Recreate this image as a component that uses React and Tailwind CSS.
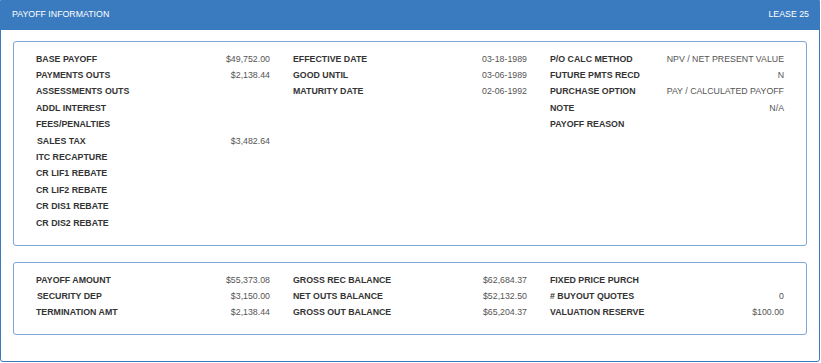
import React from 'react';

const topColumns = [
  [
    ['BASE PAYOFF', '$49,752.00'],
    ['PAYMENTS OUTS', '$2,138.44'],
    ['ASSESSMENTS OUTS', ''],
    ['ADDL INTEREST', ''],
    ['FEES/PENALTIES', ''],
    ['SALES TAX', '$3,482.64', true],
    ['ITC RECAPTURE', ''],
    ['CR LIF1 REBATE', ''],
    ['CR LIF2 REBATE', ''],
    ['CR DIS1 REBATE', ''],
    ['CR DIS2 REBATE', ''],
  ],
  [
    ['EFFECTIVE DATE', '03-18-1989'],
    ['GOOD UNTIL', '03-06-1989'],
    ['MATURITY DATE', '02-06-1992'],
  ],
  [
    ['P/O CALC METHOD', 'NPV / NET PRESENT VALUE'],
    ['FUTURE PMTS RECD', 'N'],
    ['PURCHASE OPTION', 'PAY / CALCULATED PAYOFF'],
    ['NOTE', 'N/A'],
    ['PAYOFF REASON', ''],
  ],
];

const bottomColumns = [
  [
    ['PAYOFF AMOUNT', '$55,373.08'],
    ['SECURITY DEP', '$3,150.00', true],
    ['TERMINATION AMT', '$2,138.44'],
  ],
  [
    ['GROSS REC BALANCE', '$62,684.37'],
    ['NET OUTS BALANCE', '$52,132.50'],
    ['GROSS OUT BALANCE', '$65,204.37'],
  ],
  [
    ['FIXED PRICE PURCH', ''],
    ['# BUYOUT QUOTES', '0'],
    ['VALUATION RESERVE', '$100.00'],
  ],
];

const Row = ({ label, value, nudge }) => (
  <div className="flex h-[16.4px] items-center justify-between">
    <span className={`font-bold text-[#333] ${nudge ? 'pl-px' : ''}`}>{label}</span>
    <span className="text-[#555]">{value}</span>
  </div>
);

const Section = ({ columns, className }) => (
  <div className={`rounded-[3px] border border-[#7ea6d6] ${className}`}>
    <div className="grid grid-cols-3 gap-x-[23px] px-[22px]">
      {columns.map((col, i) => (
        <div key={i}>
          {col.map(([label, value, nudge]) => (
            <Row key={label} label={label} value={value} nudge={nudge} />
          ))}
        </div>
      ))}
    </div>
  </div>
);

const App = () => {
  return (
    <div className="h-[363px] w-[821px] bg-white font-['Liberation_Sans',Arial,sans-serif] text-[8.8px]">
      <div className="h-[362px] w-[820px] rounded-b-[3px] border border-[#3a7bbf]">
        {/* panel header */}
        <div className="flex h-[29px] items-center justify-between bg-[#3a7bbf] pb-px pl-[11px] pr-[10px] text-white">
          <span>PAYOFF INFORMATION</span>
          <span>LEASE 25</span>
        </div>

        <div className="px-[12px] pt-[11px]">
          <Section columns={topColumns} className="h-[205px] pt-[9px]" />
          <Section columns={bottomColumns} className="mt-[16px] h-[73px] pt-[9px]" />
        </div>
      </div>
    </div>
  );
};

export default App;
